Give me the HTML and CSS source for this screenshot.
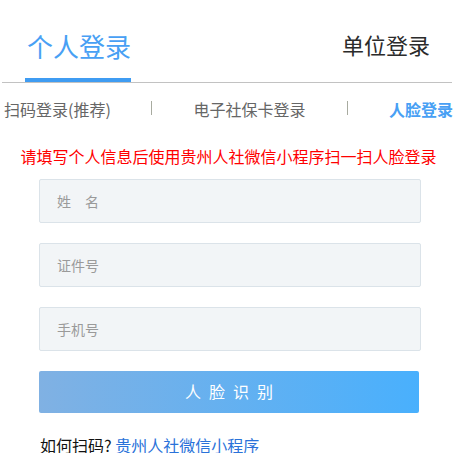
FILE: index.html
```html
<!DOCTYPE html>
<html lang="zh-CN">
<head>
<meta charset="utf-8">
<title>登录</title>
<link rel="stylesheet" href="styles.css">
</head>
<body>
<div class="page">
  <div class="tabs">
    <div class="tab tab-active"><span>个人登录</span></div>
    <div class="tab tab-other">单位登录</div>
  </div>
  <div class="subtabs">
    <div class="sub sub-1">扫码登录(推荐)</div>
    <div class="sep"></div>
    <div class="sub sub-2">电子社保卡登录</div>
    <div class="sep"></div>
    <div class="sub sub-3">人脸登录</div>
  </div>
  <p class="notice">请填写个人信息后使用贵州人社微信小程序扫一扫人脸登录</p>
  <form class="form">
    <input class="field" type="text" placeholder="姓　名">
    <input class="field" type="text" placeholder="证件号">
    <input class="field" type="text" placeholder="手机号">
    <button class="btn" type="button">人脸识别</button>
    <p class="help">如何扫码? <a class="help-link" href="#">贵州人社微信小程序</a></p>
  </form>
</div>
</body>
</html>
```
FILE: styles.css
```css
* { box-sizing: border-box; }
html, body { margin: 0; padding: 0; background: #fff; }
body {
  font-family: "Noto Sans CJK SC", "Noto Sans", sans-serif;
  color: #333;
  width: 461px;
  overflow: hidden;
}
.page { width: 461px; }

.tabs {
  display: flex;
  margin-left: 2px;
  width: 450px;
  border-bottom: 1px solid #c2c2c2;
}
.tab-active {
  margin-left: 23px;
  width: 106px;
  padding: 33px 0 19px 2px;
  font-size: 26px;
  line-height: 26px;
  color: #48a0f4;
  border-bottom: 4px solid #3f9cf2;
  white-space: nowrap;
}
.tab-other {
  margin-left: auto;
  padding: 33px 22px 0 0;
  font-size: 22px;
  line-height: 22px;
  color: #2b2b2b;
  white-space: nowrap;
}

.subtabs {
  display: flex;
  align-items: center;
  margin-top: 18px;
  height: 16px;
  font-size: 16px;
  line-height: 16px;
  color: #666;
  white-space: nowrap;
}
.sub-1 { width: 151px; padding-left: 4px; }
.sep { width: 1px; height: 14px; background: #a8aba0; margin-top: -3px; }
.sub-2 { width: 195px; text-align: center; }
.sub-3 { flex: 1; text-align: right; padding-right: 8px; color: #48a0f4; font-weight: bold; }

.notice {
  margin: 31px 0 0;
  padding-right: 4px;
  text-align: center;
  font-size: 16px;
  line-height: 16px;
  color: #ff0000;
  white-space: nowrap;
}

.form {
  margin: 15px 0 0 39px;
  width: 382px;
  display: flex;
  flex-direction: column;
  gap: 20px;
}
.field {
  display: block;
  width: 382px;
  height: 44px;
  margin: 0;
  padding: 0 0 0 17px;
  border: 1px solid #dbe3e9;
  border-radius: 2px;
  background: #f2f5f7;
  font-family: "Noto Sans CJK SC", "Noto Sans", sans-serif;
  font-size: 14px;
  color: #333;
  outline: none;
}
.field::placeholder { color: #9a9a9a; }

.btn {
  display: block;
  width: 380px;
  height: 42px;
  margin: 0;
  padding: 0 0 3px 8px;
  border: none;
  border-radius: 2px;
  background: linear-gradient(to right, #80b1e3, #49b0fd);
  color: #fff;
  font-family: "Noto Sans CJK SC", "Noto Sans", sans-serif;
  font-size: 16px;
  letter-spacing: 8px;
  cursor: pointer;
}

.help {
  margin: 4px 0 0 1px;
  font-size: 16px;
  line-height: 16px;
  color: #111;
  white-space: nowrap;
}
.help-link { color: #2a72d9; text-decoration: none; }
```
